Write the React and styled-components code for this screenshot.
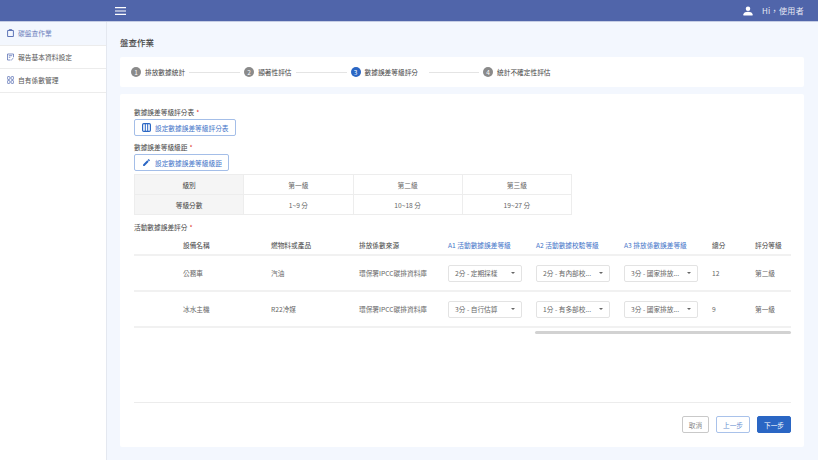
import React from "react";
import styled, { createGlobalStyle } from "styled-components";

const Global = createGlobalStyle`
  html, body { margin: 0; padding: 0; }
  body { font-family: "Noto Sans CJK TC", "Noto Sans", sans-serif; background: #f3f7fe; color: #444; }
  * { box-sizing: border-box; }
`;
const Page = styled.div`width: 818px; height: 460px; overflow: hidden; display: flex; flex-direction: column;`;
const Header = styled.header`
  height: 22px; flex: none; background: #5065aa; border-bottom: 1px solid #c5cde4; display: flex; align-items: center;
  padding: 0 14px 0 115px; color: #e6e9f4;
`;
const Burger = styled.svg`width: 11px; height: 8px; display: block;`;
const Spacer = styled.div`flex: 1;`;
const UserIcon = styled.svg`width: 10px; height: 10px; margin-right: 9px; display: block;`;
const Hi = styled.span`font-size: 8px; line-height: 12px; letter-spacing: .35px;`;
const Body = styled.div`flex: 1; display: flex; min-height: 0;`;
const Side = styled.nav`width: 107px; flex: none; background: #fff; border-right: 1px solid #e4e8f0;`;
const SideItem = styled.div`
  height: 23.5px; display: flex; align-items: center; gap: 4px; padding-left: 7px; font-size: 6.75px;
  border-bottom: 1px solid #ececec;
  background: ${p => p.$active ? "#f3f7fe" : "#fff"};
  color: ${p => p.$active ? "#6f82bd" : "#555"};
`;
const SideIcon = styled.svg`width: 7px; height: 8px; flex: none; display: block; color: #5f75b8;`;
const Main = styled.main`flex: 1; padding: 0 14px 13px 13px; display: flex; flex-direction: column; min-width: 0;`;
const Title = styled.h1`margin: 0; height: 35px; padding-top: 13px; font-size: 8.5px; line-height: 15px; font-weight: 500; color: #444;`;
const StepCard = styled.div`height: 30px; flex: none; background: #fff; border-radius: 2px; display: flex; align-items: center; padding: 0 11px; margin-bottom: 7px;`;
const Step = styled.div`display: flex; align-items: center; gap: 4px; font-size: 6.7px; color: #444; white-space: nowrap;`;
const StepNum = styled.span`
  width: 10px; height: 10px; border-radius: 50%; background: ${p => p.$on ? "#2a66c4" : "#8a8a8a"}; color: #fff;
  font-size: 6.5px; line-height: 10px; text-align: center; flex: none;
`;
const StepLine = styled.div`height: 1px; width: ${p => p.$w}px; background: #e4e4e4; margin: 0 4px 0 ${p => p.$l}px;`;
const Card = styled.section`flex: 1; background: #fff; border-radius: 2px; padding: 13px 13px 14px 14px; min-height: 0; display: flex; flex-direction: column;`;
const Label = styled.div`font-size: 6.7px; line-height: 10px; color: #444; height: 10px;`;
const Req = styled.span`color: #d22; margin-left: 2px;`;
const OutlineBtn = styled.button`
  display: flex; align-items: center; gap: 4px; height: 17px; padding: 0 0 0 7px; margin: 2px 0 6px; border: 1.5px solid #a4bee8; border-radius: 2px;
  background: #fff; color: #3f74c8; font: 400 6.7px "Noto Sans CJK TC", sans-serif; width: ${p => p.$w}px; white-space: nowrap;
`;
const BtnIcon = styled.svg`width: 9px; height: 9px; flex: none; display: block;`;
const Grade = styled.div`display: grid; grid-template-columns: repeat(4, 1fr); width: 438px; border-top: 1px solid #ededed; border-left: 1px solid #ededed; margin-top: -3px;`;
const GradeCell = styled.div`
  height: 20px; display: flex; align-items: center; justify-content: center; font-size: 6.7px; border-right: 1px solid #ededed; border-bottom: 1px solid #ededed;
  background: ${p => p.$head ? "#f5f5f5" : "#fff"}; color: ${p => p.$head ? "#444" : "#666"};
`;
const TableLabel = styled(Label)`margin-top: 7px;`;
const Row = styled.div`
  display: grid; grid-template-columns: 49px 88px 88px 89px 88px 88px 88px 43px 36px; align-items: center; width: 657px;
  height: ${p => p.$h}px; border-bottom: 2px solid #f1f1f1; font-size: 6.7px; color: ${p => p.$head ? "#444" : "#666"}; white-space: nowrap;
`;
const TableWrap = styled.div`margin-top: 3px;`;
const Blue = styled.span`color: #3f74c8;`;
const Select = styled.div`
  width: 74px; height: 17px; border: 1px solid #e3e3e3; border-radius: 2px; display: flex; align-items: center; justify-content: space-between;
  padding: 0 6px 0 6px; font-size: 6.7px; color: #666; background: #fff;
`;
const Caret = styled.span`width: 0; height: 0; border-left: 2.5px solid transparent; border-right: 2.5px solid transparent; border-top: 2.5px solid #666;`;
const Track = styled.div`display: flex; justify-content: flex-end; height: 3px; margin-top: 3px;`;
const Thumb = styled.div`width: 256px; height: 3px; border-radius: 2px; background: #d2d2d2;`;
const Fill = styled.div`flex: 1;`;
const Footer = styled.div`border-top: 1px solid #ececec; padding-top: 13px; display: flex; justify-content: flex-end; gap: 7px;`;
const FootBtn = styled.button`
  height: 17px; width: ${p => p.$w}px; padding: 0; border-radius: 2px; font: 400 6.7px "Noto Sans CJK TC", sans-serif;
  border: 1.5px solid ${p => p.$c}; background: ${p => p.$bg || "#fff"}; color: ${p => p.$t};
`;

const steps = [
  ["1", "排放數據統計", 51, 4], ["2", "顯著性評估", 51, 4], ["3", "數據誤差等級評分", 50, 11], ["4", "統計不確定性評估", 0, 0],
];
const rows = [
  ["公務車", "汽油", "2分 - 定期採樣", "2分 - 有內部校...", "3分 - 國家排放...", "12", "第二級"],
  ["冰水主機", "R22冷媒", "3分 - 自行估算", "1分 - 有多部校...", "3分 - 國家排放...", "9", "第一級"],
];

export default function App() {
  return (
    <Page>
      <Global />
      <Header>
        <Burger viewBox="0 0 11 8"><path d="M0 .6h11M0 4h11M0 7.400h11" stroke="#fff" strokeWidth="1.100" /></Burger>
        <Spacer />
        <UserIcon viewBox="0 0 12 12"><circle cx="6" cy="3.200" r="2.700" fill="#fff" /><path d="M0.500 11.500V10c0-2 3.200-3 5.500-3s5.500 1 5.500 3v1.500z" fill="#fff" /></UserIcon>
        <Hi>Hi，使用者</Hi>
      </Header>
      <Body>
        <Side>
          <SideItem $active>
            <SideIcon viewBox="0 0 7 8"><path d="M.6 1.500h5.800v6H.6zM2.200 1.500V.6h2.600v.9" fill="none" stroke="currentColor" strokeWidth="1" /></SideIcon>
            碳盤查作業
          </SideItem>
          <SideItem>
            <SideIcon viewBox="0 0 7 8"><path d="M6.500 4V1H.5v6h3M1.800 2.700h3.400M1.800 4.300h1.500M4.200 7.200l2.300-2.300" fill="none" stroke="currentColor" strokeWidth=".8" /></SideIcon>
            報告基本資料設定
          </SideItem>
          <SideItem>
            <SideIcon viewBox="0 0 7 8"><g fill="none" stroke="currentColor" strokeWidth=".8"><rect x=".4" y=".6" width="2.500" height="2.800" rx=".6" /><rect x="4.100" y=".6" width="2.500" height="2.800" rx=".6" /><rect x=".4" y="4.600" width="2.500" height="2.800" rx=".6" /><rect x="4.100" y="4.600" width="2.500" height="2.800" rx=".6" /></g></SideIcon>
            自有係數管理
          </SideItem>
        </Side>
        <Main>
          <Title>盤查作業</Title>
          <StepCard>
            {steps.map(([n, t, w, l]) => (
              <React.Fragment key={n}>
                <Step><StepNum $on={n === "3"}>{n}</StepNum>{t}</Step>
                {w > 0 && <StepLine $w={w} $l={l} />}
              </React.Fragment>
            ))}
          </StepCard>
          <Card>
            <Label>數據誤差等級評分表<Req>*</Req></Label>
            <OutlineBtn $w={102}>
              <BtnIcon viewBox="0 0 9 9"><rect x=".6" y=".6" width="7.800" height="7.800" rx="1.200" fill="none" stroke="#2a66c4" strokeWidth="1.200" /><path d="M3.300 1v7M5.700 1v7" stroke="#2a66c4" strokeWidth="1" /></BtnIcon>
              設定數據誤差等級評分表
            </OutlineBtn>
            <Label>數據誤差等級級距<Req>*</Req></Label>
            <OutlineBtn $w={95}>
              <BtnIcon viewBox="0 0 24 24"><path fill="#2a66c4" d="M3 17.250V21h3.750L17.810 9.940l-3.750-3.750L3 17.250zM20.710 7.040a1 1 0 0 0 0-1.410l-2.340-2.340a1 1 0 0 0-1.410 0l-1.830 1.830 3.750 3.750 1.830-1.830z" /></BtnIcon>
              設定數據誤差等級級距
            </OutlineBtn>
            <Grade>
              <GradeCell $head>級別</GradeCell><GradeCell>第一級</GradeCell><GradeCell>第二級</GradeCell><GradeCell>第三級</GradeCell>
              <GradeCell $head>等級分數</GradeCell><GradeCell>1~9 分</GradeCell><GradeCell>10~18 分</GradeCell><GradeCell>19~27 分</GradeCell>
            </Grade>
            <TableLabel>活動數據誤差評分<Req>*</Req></TableLabel>
            <TableWrap>
              <Row $head $h={21}>
                <span /><span>設備名稱</span><span>燃物料或產品</span><span>排放係數來源</span>
                <Blue>A1 活動數據誤差等級</Blue><Blue>A2 活動數據校驗等級</Blue><Blue>A3 排放係數誤差等級</Blue>
                <span>總分</span><span>評分等級</span>
              </Row>
              {rows.map(r => (
                <Row $h={36} key={r[0]}>
                  <span /><span>{r[0]}</span><span>{r[1]}</span><span>環保署IPCC碳排資料庫</span>
                  {[r[2], r[3], r[4]].map((s, i) => <Select key={i}>{s}<Caret /></Select>)}
                  <span>{r[5]}</span><span>{r[6]}</span>
                </Row>
              ))}
            </TableWrap>
            <Track><Thumb /></Track>
            <Fill />
            <Footer>
              <FootBtn $w={27} $c="#c9c9c9" $t="#888">取消</FootBtn>
              <FootBtn $w={34} $c="#a9c2ea" $t="#6a8fd0">上一步</FootBtn>
              <FootBtn $w={34} $c="#2a66c4" $bg="#2a66c4" $t="#fff">下一步</FootBtn>
            </Footer>
          </Card>
        </Main>
      </Body>
    </Page>
  );
}
